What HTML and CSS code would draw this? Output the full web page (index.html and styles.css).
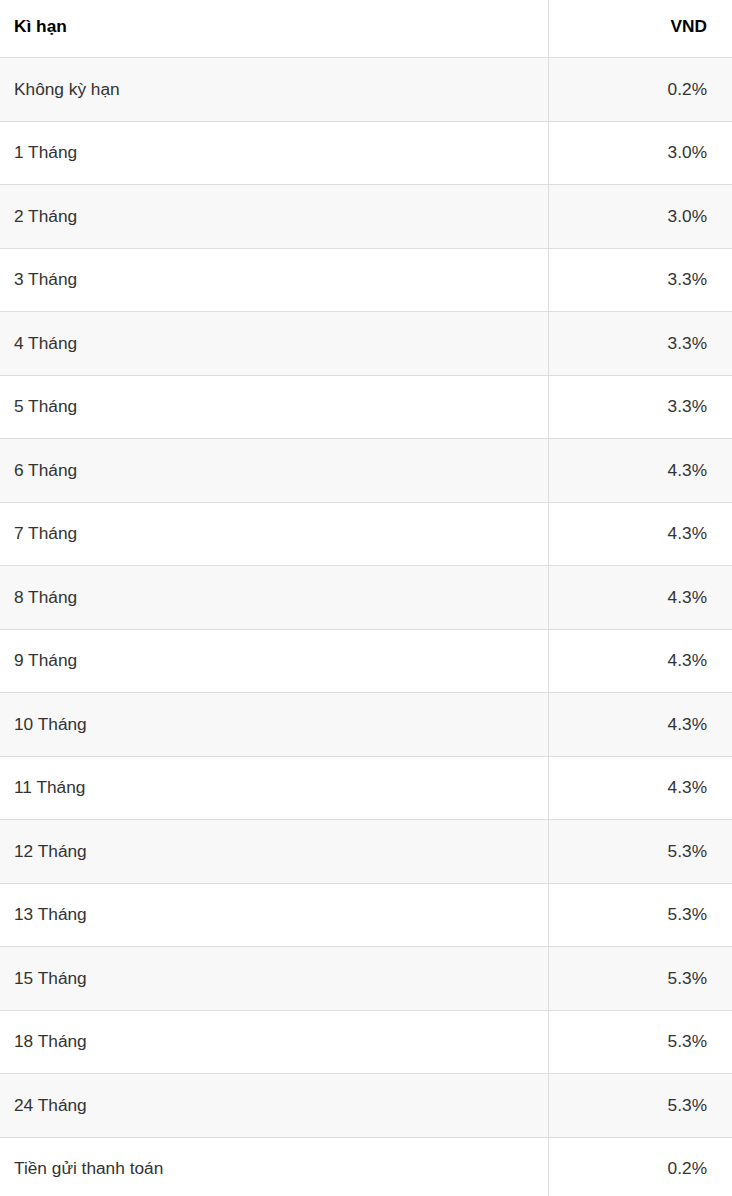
FILE: index.html
```html
<!DOCTYPE html>
<html>
<head>
  <meta charset="utf-8">
  <title>lãi suất</title>
  <link rel="stylesheet" href="styles.css">
</head>
<body>
  <table class="rates">
    <thead>
      <tr><th class="term">Kì hạn</th><th class="rate">VND</th></tr>
    </thead>
    <tbody>
      <tr><td class="term">Không kỳ hạn</td><td class="rate">0.2%</td></tr>
      <tr><td class="term">1 Tháng</td><td class="rate">3.0%</td></tr>
      <tr><td class="term">2 Tháng</td><td class="rate">3.0%</td></tr>
      <tr><td class="term">3 Tháng</td><td class="rate">3.3%</td></tr>
      <tr><td class="term">4 Tháng</td><td class="rate">3.3%</td></tr>
      <tr><td class="term">5 Tháng</td><td class="rate">3.3%</td></tr>
      <tr><td class="term">6 Tháng</td><td class="rate">4.3%</td></tr>
      <tr><td class="term">7 Tháng</td><td class="rate">4.3%</td></tr>
      <tr><td class="term">8 Tháng</td><td class="rate">4.3%</td></tr>
      <tr><td class="term">9 Tháng</td><td class="rate">4.3%</td></tr>
      <tr><td class="term">10 Tháng</td><td class="rate">4.3%</td></tr>
      <tr><td class="term">11 Tháng</td><td class="rate">4.3%</td></tr>
      <tr><td class="term">12 Tháng</td><td class="rate">5.3%</td></tr>
      <tr><td class="term">13 Tháng</td><td class="rate">5.3%</td></tr>
      <tr><td class="term">15 Tháng</td><td class="rate">5.3%</td></tr>
      <tr><td class="term">18 Tháng</td><td class="rate">5.3%</td></tr>
      <tr><td class="term">24 Tháng</td><td class="rate">5.3%</td></tr>
      <tr><td class="term">Tiền gửi thanh toán</td><td class="rate">0.2%</td></tr>
    </tbody>
  </table>
</body>
</html>
```

FILE: styles.css
```css
* {
  margin: 0; padding: 0;
  box-sizing: border-box; }
body {
  font-family: 'Liberation Sans', Arial, sans-serif;
  font-size: 17.3px;
  color: #333;
  background: #fff; }
.rates {
  width: 100%;
  border-collapse: collapse; }
.rates th, .rates td {
  padding: 19.5px 25px 20.5px 14px;
  line-height: 22.5px;
  text-align: left; }
.rates th {
  padding-top: 14.75px; padding-bottom: 19.75px;
  font-weight: bold;
  color: #000; }
.rates tr {
  border-bottom: 1px solid #ddd; }
.rates .term {
  width: 74.95%;
  border-right: 1px solid #ddd; }
.rates .rate {
  text-align: right; }
.rates tbody tr:nth-child(odd) {
  background: #f8f8f8; }
```
